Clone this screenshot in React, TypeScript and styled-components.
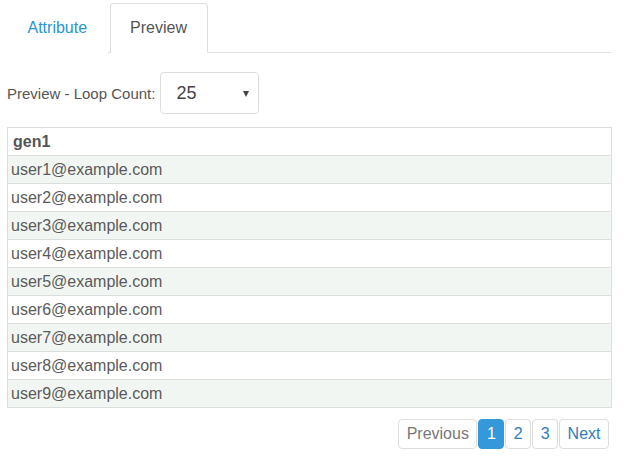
import React from "react";
import styled, { createGlobalStyle } from "styled-components";

const Global = createGlobalStyle`
  html, body { margin: 0; padding: 0; background: #ffffff; }
  body { font-family: "Liberation Sans", Arial, sans-serif; color: #555555; }
  * { box-sizing: border-box; }
`;

const Page = styled.div`
  width: 604px;
  margin-left: 7px;
`;

const Tabs = styled.ul`
  list-style: none;
  margin: 0;
  padding: 3px 0 0 0;
  display: flex;
  height: 53px;
  border-bottom: 1px solid #dddddd;
`;

const Tab = styled.li<{ $active?: boolean }>`
  margin-right: 2px;
  margin-bottom: -1px;
  padding: 14px 19.5px;
  line-height: 20px;
  height: 50px;
  font-size: 16px;
  border: 1px solid ${(p) => (p.$active ? "#dddddd" : "transparent")};
  border-bottom-color: ${(p) => (p.$active ? "#ffffff" : "transparent")};
  border-radius: 4px 4px 0 0;
  background: #ffffff;
  color: ${(p) => (p.$active ? "#555555" : "#2a94cf")};
  cursor: pointer;
`;

const FormRow = styled.div`
  display: flex;
  align-items: center;
  margin-top: 19px;
`;

const Label = styled.label`
  font-size: 15px;
  color: #555555;
  margin-right: 5px;
`;

const Select = styled.div`
  position: relative;
  width: 99px;
  height: 42px;
  border: 1px solid #dddddd;
  border-radius: 4px;
  padding-left: 15px;
  display: flex;
  align-items: center;
  font-size: 18px;
  color: #444444;
`;

const Caret = styled.span`
  position: absolute;
  right: 9px;
  top: 18px;
  width: 0;
  height: 0;
  border-left: 3.5px solid transparent;
  border-right: 3.5px solid transparent;
  border-top: 6px solid #444444;
`;

const Table = styled.table`
  margin-top: 13px;
  width: 605px;
  border-collapse: collapse;
  font-size: 16px;
`;

const Th = styled.th`
  text-align: left;
  font-weight: bold;
  color: #555555;
  border: 1px solid #dddddd;
  padding: 4px 5px;
  line-height: 19px;
  height: 28px;
`;

const Tr = styled.tr<{ $striped: boolean }>`
  background: ${(p) => (p.$striped ? "#f2f6f3" : "#ffffff")};
`;

const Td = styled.td`
  border: 1px solid #dddddd;
  padding: 4px 3px;
  line-height: 19px;
  height: 28px;
  color: #5a5a5a;
`;

const Pager = styled.div`
  display: flex;
  justify-content: flex-end;
  gap: 1px;
  margin-top: 11px;
  padding-right: 2px;
`;

const PageBtn = styled.span<{ $active?: boolean; $disabled?: boolean }>`
  height: 30px;
  padding: 0 7.5px;
  line-height: 28px;
  font-size: 16px;
  border: 1px solid ${(p) => (p.$active ? "#3498db" : "#dddddd")};
  border-radius: 4px;
  background: ${(p) => (p.$active ? "#3498db" : "#ffffff")};
  color: ${(p) => (p.$active ? "#ffffff" : p.$disabled ? "#777777" : "#2f7bbf")};
`;

const users = Array.from({ length: 9 }, (_, i) => `user${i + 1}@example.com`);

export default function App() {
  return (
    <>
      <Global />
      <Page>
        <Tabs>
          <Tab>Attribute</Tab>
          <Tab $active>Preview</Tab>
        </Tabs>
        <FormRow>
          <Label>Preview - Loop Count:</Label>
          <Select>
            25
            <Caret />
          </Select>
        </FormRow>
        <Table>
          <thead>
            <tr>
              <Th>gen1</Th>
            </tr>
          </thead>
          <tbody>
            {users.map((u, i) => (
              <Tr key={u} $striped={i % 2 === 0}>
                <Td>{u}</Td>
              </Tr>
            ))}
          </tbody>
        </Table>
        <Pager>
          <PageBtn $disabled>Previous</PageBtn>
          <PageBtn $active>1</PageBtn>
          <PageBtn>2</PageBtn>
          <PageBtn>3</PageBtn>
          <PageBtn>Next</PageBtn>
        </Pager>
      </Page>
    </>
  );
}
